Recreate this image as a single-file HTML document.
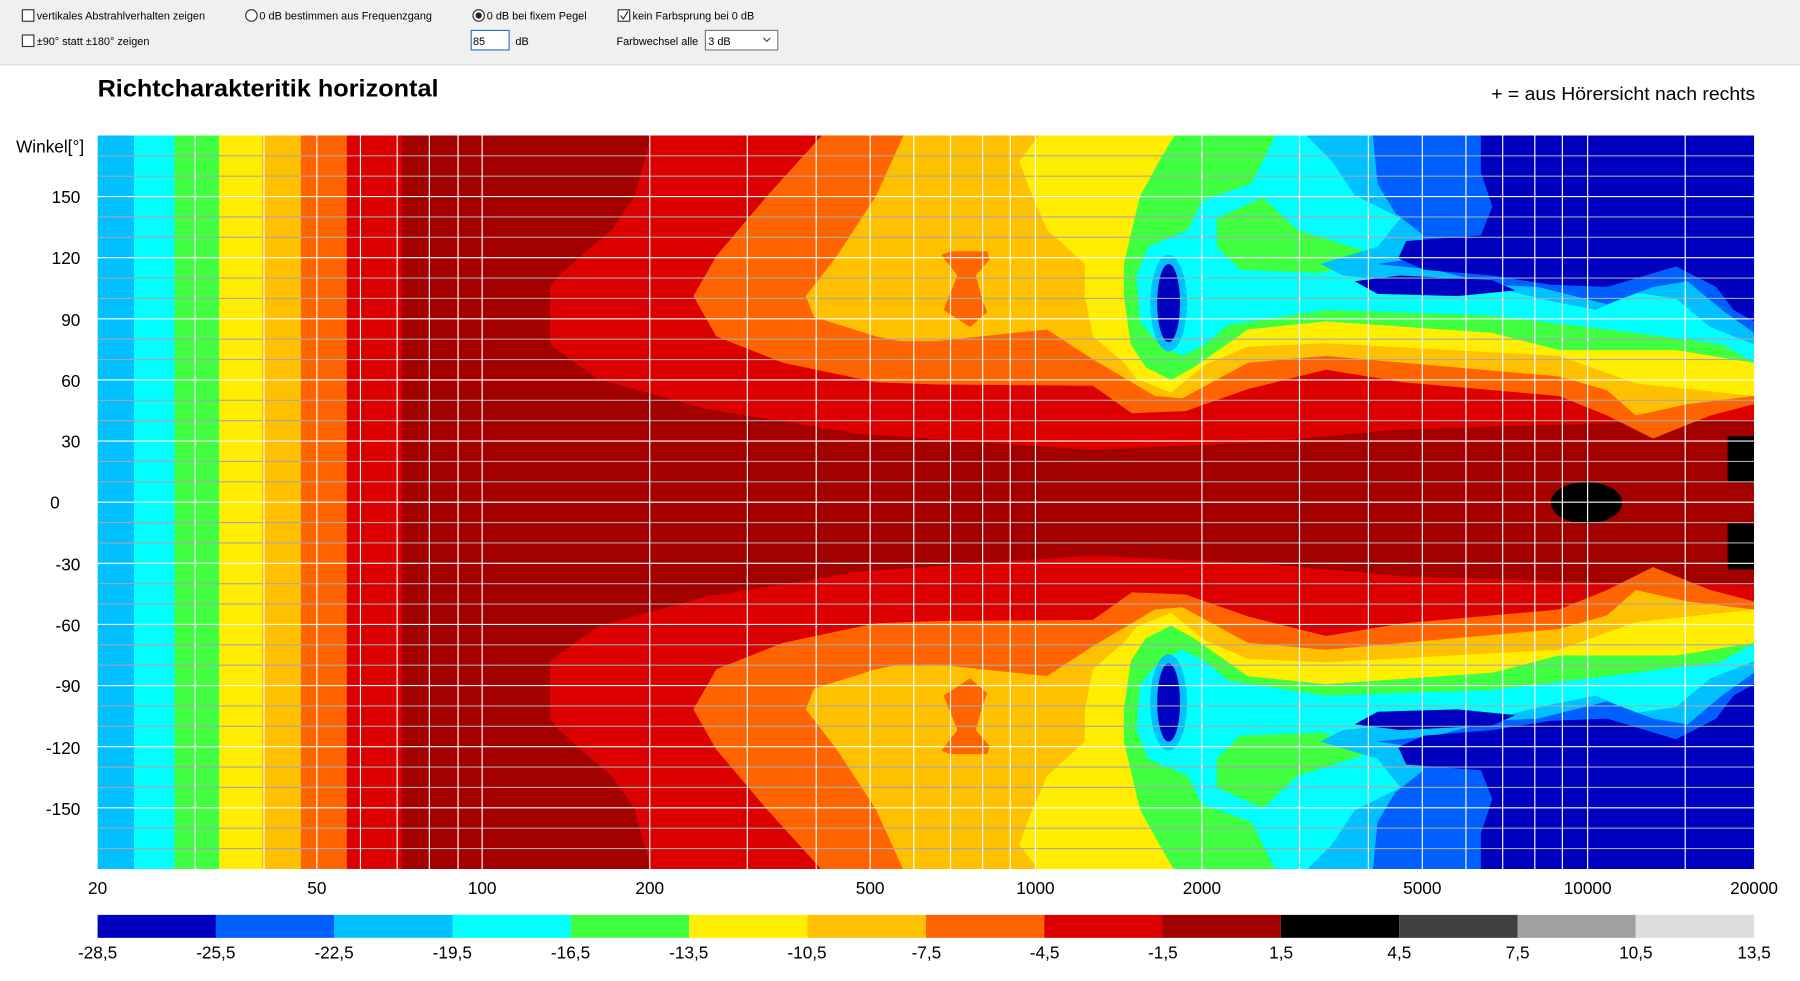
<!DOCTYPE html>
<html><head><meta charset="utf-8"><style>
html,body{margin:0;padding:0;background:#fff;overflow:hidden}
svg{display:block}
text{font-family:"Liberation Sans",sans-serif}
</style></head><body>
<svg width="1800" height="981" viewBox="0 0 1568 854.6" preserveAspectRatio="none" xmlns="http://www.w3.org/2000/svg">
<rect x="0" y="0" width="1568" height="56" fill="#f0f0f0"/>
<line x1="0" y1="56.5" x2="1568" y2="56.5" stroke="#d9d9d9"/>
<g font-size="9.5" fill="#000">
<rect x="19.5" y="8.5" width="10" height="10" fill="#fff" stroke="#333"/>
<text x="32" y="17">vertikales Abstrahlverhalten zeigen</text>
<circle cx="219" cy="13.5" r="5" fill="#fff" stroke="#333"/>
<text x="226" y="17">0 dB bestimmen aus Frequenzgang</text>
<circle cx="417" cy="13.5" r="5" fill="#fff" stroke="#333"/><circle cx="417" cy="13.5" r="2.7" fill="#222"/>
<text x="424" y="17">0 dB bei fixem Pegel</text>
<rect x="538.5" y="8.5" width="10" height="10" fill="#fff" stroke="#333"/>
<path d="M540.5 13.5 L543 16.5 L547 10" fill="none" stroke="#222" stroke-width="1"/>
<text x="551" y="17">kein Farbsprung bei 0 dB</text>
<rect x="19.5" y="30.5" width="10" height="10" fill="#fff" stroke="#333"/>
<text x="32" y="39">±90° statt ±180° zeigen</text>
<rect x="410.5" y="26.5" width="33" height="17" fill="#fff" stroke="#2a73c4"/>
<text x="412" y="39">85</text>
<text x="449" y="39">dB</text>
<text x="537" y="39">Farbwechsel  alle</text>
<rect x="614.5" y="26.5" width="63" height="17" fill="#fff" stroke="#7a7a7a"/>
<text x="617" y="39">3 dB</text>
<path d="M665 33 L668 36 L671 33" fill="none" stroke="#444"/>
</g>
<text x="85" y="84" font-size="21" font-weight="bold" textLength="297" lengthAdjust="spacingAndGlyphs">Richtcharakteritik horizontal</text>
<text x="1299" y="87" font-size="16" textLength="230" lengthAdjust="spacingAndGlyphs">+ = aus Hörersicht nach rechts</text>
<defs><clipPath id="c"><rect x="85" y="118" width="1443" height="639"/></clipPath>
<g id="half">
<rect x="350" y="118" width="1178" height="320" fill="#a30000"/>
<polygon fill="#dd0000" points="567,118 1528,118 1528,366 1425,368 1222,374 1100,385 952,392 749,378 614,356 520,330 479,300 479,250 486,241 506,223 533,200 553,171"/>
<polygon fill="#ff6400" points="716,118 1528,118 1528,352 1490,362 1440,382 1400,362 1358,345 1222,333 1155,322 1087,339 1033,358 986,360 952,336 817,335 763,333 682,316 624,293 604,258 624,223 668,171"/>
<polygon fill="#ffc000" points="787,118 1528,118 1528,345 1470,352 1425,362 1400,340 1358,328 1155,310 1087,316 1030,347 1006,345 952,313 912,287 817,297 783,297 763,293 709,276 702,258 729,223 763,171"/>
<polygon fill="#ff6400" points="820,222 828,219 860,219 862,226 850,240 856,262 860,272 845,285 822,270 834,240"/>
<polygon fill="#ffee00" points="905,118 1528,118 1528,345 1425,334 1358,310 1155,299 1087,302 1050,318 1020,342 990,330 979,316 952,293 945,258 945,230 912,200 895,160 888,140"/>
<polygon fill="#40ff40" points="1023,118 1528,118 1528,316 1460,305 1358,305 1300,290 1155,280 1087,287 1040,320 1020,331 998,320 985,300 979,258 979,230 993,171 1010,140"/>
<polygon fill="#00ffff" points="1111,118 1528,118 1528,316 1500,300 1425,290 1300,275 1155,270 1070,283 1050,300 1030,310 1010,300 993,280 990,240 1000,215 1035,200 1047,175 1090,160"/>
<polygon fill="#40ff40" points="1060,190 1100,172 1130,200 1209,225 1150,238 1080,235 1060,215"/>
<polygon fill="#00c0ff" points="1138,118 1528,118 1528,300 1490,285 1460,260 1425,255 1390,270 1350,262 1300,250 1222,245 1170,240 1150,230 1200,215 1220,190 1180,170 1160,140"/>
<polygon fill="#0060ff" points="1196,118 1528,118 1528,290 1500,270 1470,245 1440,250 1400,265 1340,250 1300,248 1250,235 1200,230 1235,225 1240,205 1215,185 1200,160"/>
<polygon fill="#0000c0" points="1290,118 1528,118 1528,280 1510,270 1495,250 1460,232 1400,250 1350,248 1300,240 1240,235 1218,225 1225,210 1290,205 1300,180 1290,150"/>
<polygon fill="#0000c0" points="1180,245 1220,240 1300,244 1320,253 1270,258 1200,256"/>
<ellipse cx="1018" cy="264" rx="16" ry="42" fill="#00c0ff"/>
<ellipse cx="1018" cy="264" rx="10" ry="34" fill="#0000c0"/>
<ellipse cx="1382" cy="438" rx="31" ry="18" fill="#000"/>
<rect x="1505" y="380" width="23" height="40" fill="#000"/>
</g></defs>
<g clip-path="url(#c)">
<rect x="85" y="118" width="32" height="639" fill="#00c0ff"/>
<rect x="117" y="118" width="35" height="639" fill="#00ffff"/>
<rect x="152" y="118" width="39" height="639" fill="#40ff40"/>
<rect x="191" y="118" width="37" height="639" fill="#ffee00"/>
<rect x="228" y="118" width="34" height="639" fill="#ffc000"/>
<rect x="262" y="118" width="40" height="639" fill="#ff6400"/>
<rect x="302" y="118" width="50" height="639" fill="#dd0000"/>
<use href="#half"/>
<use href="#half" transform="translate(0,876) scale(1,-1)"/>
<g stroke="#a8a8a8" stroke-width="1">
<path d="M85 135.75H1528M85 153.5H1528M85 189H1528M85 206.75H1528M85 242.25H1528M85 260H1528M85 295.5H1528M85 313.25H1528M85 348.75H1528M85 366.5H1528M85 402H1528M85 419.75H1528M85 455.25H1528M85 473H1528M85 508.5H1528M85 526.25H1528M85 561.75H1528M85 579.5H1528M85 615H1528M85 632.75H1528M85 668.25H1528M85 686H1528M85 721.5H1528M85 739.25H1528"/>
</g>
<g stroke="#fff" stroke-width="1">
<path d="M85 171.25H1528M85 224.5H1528M85 277.75H1528M85 331H1528M85 384.25H1528M85 437.5H1528M85 490.75H1528M85 544H1528M85 597.25H1528M85 650.5H1528M85 703.75H1528"/>
<path d="M170 118V757M230 118V757M276 118V757M314 118V757M346 118V757M374 118V757M399 118V757M420 118V757M566 118V757M651 118V757M711 118V757M758 118V757M796 118V757M828 118V757M856 118V757M880 118V757M902 118V757M1047 118V757M1132 118V757M1192 118V757M1239 118V757M1277 118V757M1309 118V757M1337 118V757M1361 118V757M1383 118V757M1468 118V757"/>
</g>
</g>
<g font-size="15" text-anchor="end">
<text x="70" y="177">150</text><text x="70" y="230">120</text><text x="70" y="284">90</text><text x="70" y="337">60</text><text x="70" y="390">30</text><text x="52" y="443">0</text><text x="70" y="497">-30</text><text x="70" y="550">-60</text><text x="70" y="603">-90</text><text x="70" y="657">-120</text><text x="70" y="710">-150</text>
</g>
<text x="14" y="133" font-size="15">Winkel[°]</text>
<g font-size="15" text-anchor="middle">
<text x="85" y="779">20</text><text x="276" y="779">50</text><text x="420" y="779">100</text><text x="566" y="779">200</text><text x="758" y="779">500</text><text x="902" y="779">1000</text><text x="1047" y="779">2000</text><text x="1239" y="779">5000</text><text x="1383" y="779">10000</text><text x="1528" y="779">20000</text>
</g>
<g>
<rect x="85" y="797" width="103.1" height="20" fill="#0000c0"/>
<rect x="188.1" y="797" width="103.1" height="20" fill="#0060ff"/>
<rect x="291.1" y="797" width="103.1" height="20" fill="#00c0ff"/>
<rect x="394.2" y="797" width="103.1" height="20" fill="#00ffff"/>
<rect x="497.3" y="797" width="103.1" height="20" fill="#40ff40"/>
<rect x="600.4" y="797" width="103.1" height="20" fill="#ffee00"/>
<rect x="703.4" y="797" width="103.1" height="20" fill="#ffc000"/>
<rect x="806.5" y="797" width="103.1" height="20" fill="#ff6400"/>
<rect x="909.6" y="797" width="103.1" height="20" fill="#dd0000"/>
<rect x="1012.6" y="797" width="103.1" height="20" fill="#a30000"/>
<rect x="1115.7" y="797" width="103.1" height="20" fill="#000"/>
<rect x="1218.8" y="797" width="103.1" height="20" fill="#404040"/>
<rect x="1321.9" y="797" width="103.1" height="20" fill="#a0a0a0"/>
<rect x="1424.9" y="797" width="103.1" height="20" fill="#dddddd"/>
</g>
<g font-size="15" text-anchor="middle">
<text x="85" y="835">-28,5</text><text x="188" y="835">-25,5</text><text x="291" y="835">-22,5</text><text x="394" y="835">-19,5</text><text x="497" y="835">-16,5</text><text x="600" y="835">-13,5</text><text x="703" y="835">-10,5</text><text x="807" y="835">-7,5</text><text x="910" y="835">-4,5</text><text x="1013" y="835">-1,5</text><text x="1116" y="835">1,5</text><text x="1219" y="835">4,5</text><text x="1322" y="835">7,5</text><text x="1425" y="835">10,5</text><text x="1528" y="835">13,5</text>
</g>
</svg>
</body></html>
